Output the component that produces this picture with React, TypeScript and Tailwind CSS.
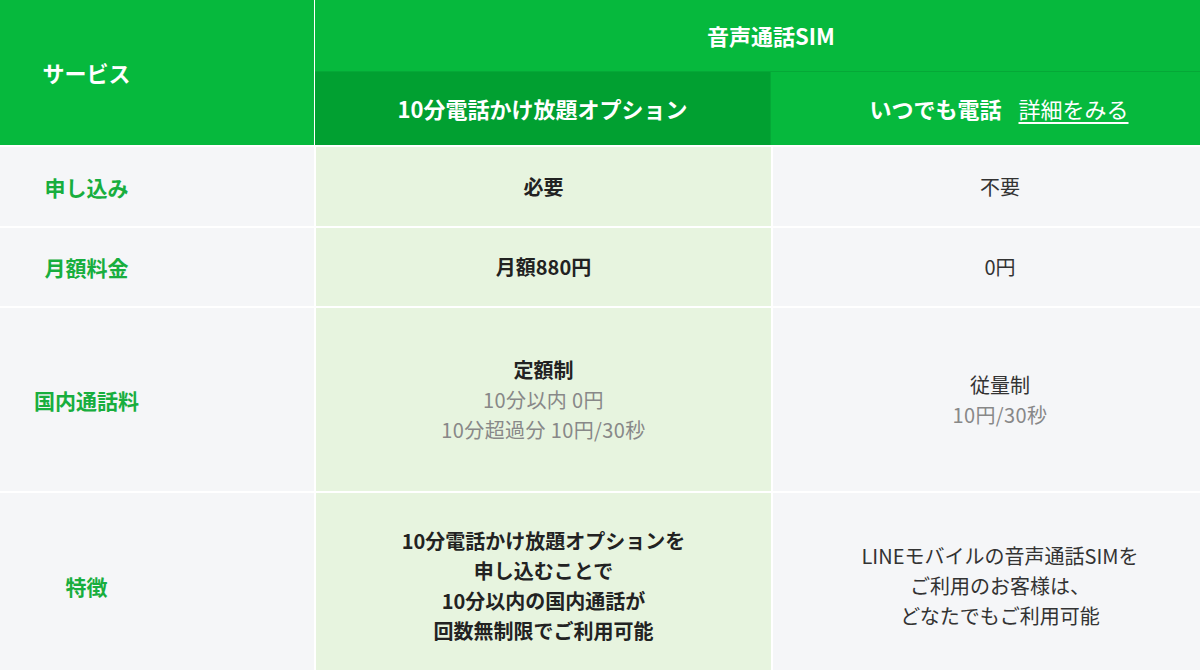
const rows = [
  {
    label: "申し込み",
    h: "h-[79px]",
    option: <p className="font-bold text-[#222]">必要</p>,
    always: <p className="text-[#333]">不要</p>,
  },
  {
    label: "月額料金",
    h: "h-[78px]",
    option: <p className="font-bold text-[#222]">月額880円</p>,
    always: <p className="text-[#333]">0円</p>,
  },
  {
    label: "国内通話料",
    h: "h-[183px]",
    option: (
      <>
        <p className="font-bold text-[#222]">定額制</p>
        <p className="text-[#888] tracking-[0.02em]">10分以内 0円</p>
        <p className="text-[#888] tracking-[0.02em]">10分超過分 10円/30秒</p>
      </>
    ),
    always: (
      <>
        <p className="text-[#333]">従量制</p>
        <p className="text-[#888] tracking-[0.02em]">10円/30秒</p>
      </>
    ),
  },
  {
    label: "特徴",
    h: "h-[186px]",
    option: (
      <p className="font-bold text-[#222]">
        10分電話かけ放題オプションを
        <br />
        申し込むことで
        <br />
        10分以内の国内通話が
        <br />
        回数無制限でご利用可能
      </p>
    ),
    always: (
      <p className="text-[#333]">
        LINEモバイルの音声通話SIMを
        <br />
        ご利用のお客様は、
        <br />
        どなたでもご利用可能
      </p>
    ),
  },
];

export default function App() {
  return (
    <div
      className="w-[1200px] h-[670px] overflow-hidden bg-white"
      style={{ fontFamily: '"Noto Sans CJK JP", "Noto Sans", sans-serif' }}
    >
      <div className="ml-[-141px] w-[1368px] flex flex-col gap-[2px]">
        {/* header */}
        <div className="flex h-[145px] gap-[1px] text-white">
          <div className="w-[455px] bg-[#06b93d] flex items-center justify-center text-[22px] font-bold">
            サービス
          </div>
          <div className="flex-1 flex flex-col">
            <div className="h-[72px] bg-[#06b93d] border-b border-[#05a837] flex items-center justify-center text-[22px] font-bold">
              音声通話SIM
            </div>
            <div className="flex-1 flex">
              <div className="w-[455px] bg-[#01a031] flex items-center justify-center text-[22px] font-bold">
                10分電話かけ放題オプション
              </div>
              <div className="flex-1 bg-[#06b93d] border-l border-[#05a837] flex items-center justify-center gap-[17px]">
                <span className="text-[22px] font-bold">いつでも電話</span>
                <a href="#" className="text-[22px] underline underline-offset-4">
                  詳細をみる
                </a>
              </div>
            </div>
          </div>
        </div>

        {rows.map((r) => (
          <div key={r.label} className={`flex gap-[2px] ${r.h} text-[20px] leading-[30px] text-center`}>
            <div className="w-[455px] bg-[#f5f6f8] flex items-center justify-center text-[21px] font-bold text-[#18ae3e]">
              {r.label}
            </div>
            <div className="w-[455px] bg-[#e7f4df] flex flex-col items-center justify-center">
              {r.option}
            </div>
            <div className="flex-1 bg-[#f5f6f8] flex flex-col items-center justify-center">
              {r.always}
            </div>
          </div>
        ))}
      </div>
    </div>
  );
}
